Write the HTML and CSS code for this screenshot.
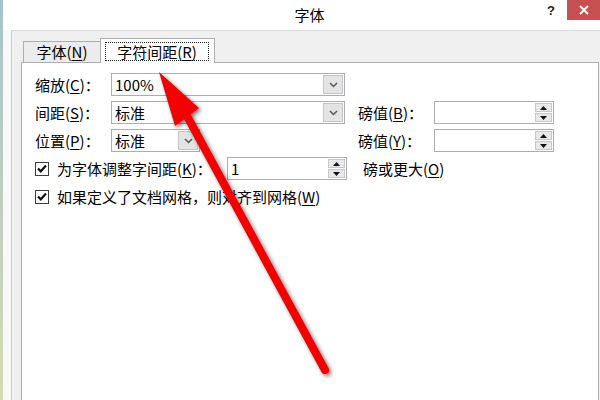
FILE: index.html
```html
<!DOCTYPE html>
<html lang="zh-CN">
<head>
    <meta charset="UTF-8">
    <title>字体</title>
    <link rel="stylesheet" href="styles.css">
</head>
<body>
<div class="screen">
    <div class="strip"></div>
    <div class="frame">
        <div class="titlebar">
            <span class="title">字体</span>
            <span class="help">?</span>
            <span class="close">
                <svg width="10" height="10" viewBox="0 0 10 10"><path d="M1 1 L9 9 M9 1 L1 9" stroke="#fff" stroke-width="1.8"/></svg>
            </span>
        </div>

        <div class="client">
            <div class="tabs">
                <div class="tab">字体(<u>N</u>)</div>
                <div class="tab active"><span class="focus">字符间距(<u>R</u>)</span></div>
            </div>

            <div class="panel">
                <div class="row">
                    <div class="left">
                        <span class="lbl">缩放(<u>C</u>)：</span>
                        <div class="combo wide">
                            <span class="val">100%</span>
                            <span class="drop"><svg width="9" height="6" viewBox="0 0 9 6"><path d="M1 1 L4.5 4.5 L8 1" fill="none" stroke="#555" stroke-width="1.5"/></svg></span>
                        </div>
                    </div>
                </div>

                <div class="row">
                    <div class="left">
                        <span class="lbl">间距(<u>S</u>)：</span>
                        <div class="combo wide">
                            <span class="val">标准</span>
                            <span class="drop"><svg width="9" height="6" viewBox="0 0 9 6"><path d="M1 1 L4.5 4.5 L8 1" fill="none" stroke="#555" stroke-width="1.5"/></svg></span>
                        </div>
                    </div>
                    <span class="lbl">磅值(<u>B</u>)：</span>
                    <div class="spin">
                        <span class="val"></span>
                        <span class="spin-btns">
                            <span class="sb"><svg width="7" height="4" viewBox="0 0 7 4"><path d="M0 4 L3.5 0 L7 4 Z" fill="#111"/></svg></span>
                            <span class="sb"><svg width="7" height="4" viewBox="0 0 7 4"><path d="M0 0 L3.5 4 L7 0 Z" fill="#111"/></svg></span>
                        </span>
                    </div>
                </div>

                <div class="row">
                    <div class="left">
                        <span class="lbl">位置(<u>P</u>)：</span>
                        <div class="combo short">
                            <span class="val">标准</span>
                            <span class="drop"><svg width="9" height="6" viewBox="0 0 9 6"><path d="M1 1 L4.5 4.5 L8 1" fill="none" stroke="#555" stroke-width="1.5"/></svg></span>
                        </div>
                    </div>
                    <span class="lbl">磅值(<u>Y</u>)：</span>
                    <div class="spin">
                        <span class="val"></span>
                        <span class="spin-btns">
                            <span class="sb"><svg width="7" height="4" viewBox="0 0 7 4"><path d="M0 4 L3.5 0 L7 4 Z" fill="#111"/></svg></span>
                            <span class="sb"><svg width="7" height="4" viewBox="0 0 7 4"><path d="M0 0 L3.5 4 L7 0 Z" fill="#111"/></svg></span>
                        </span>
                    </div>
                </div>

                <div class="row">
                    <span class="check"><svg width="10" height="9" viewBox="0 0 10 9"><path d="M1 4.5 L3.8 7.3 L9 1.5" fill="none" stroke="#111" stroke-width="2.2"/></svg></span>
                    <span class="check-lbl kern">为字体调整字间距(<u>K</u>)：</span>
                    <div class="spin">
                        <span class="val">1</span>
                        <span class="spin-btns">
                            <span class="sb"><svg width="7" height="4" viewBox="0 0 7 4"><path d="M0 4 L3.5 0 L7 4 Z" fill="#111"/></svg></span>
                            <span class="sb"><svg width="7" height="4" viewBox="0 0 7 4"><path d="M0 0 L3.5 4 L7 0 Z" fill="#111"/></svg></span>
                        </span>
                    </div>
                    <span class="after">磅或更大(<u>O</u>)</span>
                </div>

                <div class="row">
                    <span class="check"><svg width="10" height="9" viewBox="0 0 10 9"><path d="M1 4.5 L3.8 7.3 L9 1.5" fill="none" stroke="#111" stroke-width="2.2"/></svg></span>
                    <span class="check-lbl">如果定义了文档网格，则对齐到网格(<u>W</u>)</span>
                </div>
            </div>
        </div>
    </div>

    <!-- red annotation arrow drawn over the dialog -->
    <svg class="arrow" width="600" height="400" viewBox="0 0 600 400">
        <g class="arrow-shape">
            <line x1="187" y1="116" x2="325" y2="370" stroke="#f40000" stroke-width="8" stroke-linecap="round"/>
            <polygon points="159,72 199,108 175,126" fill="#f40000"/>
        </g>
    </svg>
</div>
</body>
</html>
```

FILE: styles.css
```css
/* General */
body {
    margin: 0;
    font-family: "Noto Sans CJK SC", "Liberation Sans", sans-serif;
    font-size: 15px;
    color: #000;
}

u {
    text-decoration: underline;
    text-underline-offset: 2px;
}

.screen {
    position: relative;
    width: 600px;
    height: 400px;
    overflow: hidden;
    display: flex;
    background: #fff;
}

.strip {
    width: 3px;
    background: linear-gradient(#a9c3cb, #d4dab5);
}

.frame {
    flex: 1;
    display: flex;
    flex-direction: column;
    background: #f8f8f8;
}

/* Title bar */
.titlebar {
    position: relative;
    height: 30px;
    background: #fff;
    display: flex;
    justify-content: center;
    align-items: center;
}

.title {
    padding-left: 16px;
    line-height: 30px;
}

.help {
    position: absolute;
    top: 3px;
    right: 45px;
    font-family: "Liberation Sans", sans-serif;
    font-weight: bold;
    font-size: 13px;
    color: #222;
}

.close {
    position: absolute;
    top: 0;
    right: 0;
    width: 33px;
    height: 20px;
    background: #c75050;
    display: flex;
    justify-content: center;
    align-items: center;
}

/* Client area */
.client {
    flex: 1;
    margin-left: 8px;
    border-top: 1px solid #dadada;
    border-left: 1px solid #cfcfcf;
    background: #f0f0f0;
    padding: 7px 1px 0 9px;
    display: flex;
    flex-direction: column;
}

.tabs {
    display: flex;
    align-items: flex-end;
    height: 24px;
    padding-left: 2px;
}

.tab {
    box-sizing: border-box;
    width: 77px;
    height: 21px;
    border: 1px solid #adadad;
    border-bottom: none;
    border-right: none;
    background: #ececec;
    text-align: center;
    line-height: 19px;
}

.tab.active {
    position: relative;
    z-index: 1;
    width: 115px;
    height: 25px;
    margin-bottom: -1px;
    border-right: 1px solid #adadad;
    background: #fff;
    padding: 3px 5px 2px 4px;
    line-height: 17px;
}

.focus {
    display: block;
    height: 100%;
    box-sizing: border-box;
    border: 1px dotted #222;
}

.panel {
    flex: 1;
    background: #fff;
    border: 1px solid #adadad;
    border-bottom: none;
    padding: 10px 0 0 13px;
    display: flex;
    flex-direction: column;
    gap: 5px;
}

/* Rows */
.row {
    display: flex;
    align-items: center;
    height: 23px;
}

.left {
    display: flex;
    align-items: center;
    width: 323px;
}

.lbl {
    width: 76px;
    white-space: nowrap;
}

.combo, .spin {
    box-sizing: border-box;
    height: 23px;
    border: 1px solid #abadb3;
    background: #fff;
    display: flex;
    align-items: stretch;
}

.combo.wide {
    width: 234px;
}

.combo.short {
    width: 89px;
}

.spin {
    width: 120px;
}

.val {
    flex: 1;
    padding-left: 3px;
    line-height: 21px;
}

.drop {
    width: 20px;
    margin: 1px;
    background: #e4e4e4;
    border: 1px solid #c4c4c4;
    box-sizing: border-box;
    display: flex;
    justify-content: center;
    align-items: center;
}

.spin-btns {
    width: 17px;
    margin: 1px;
    display: flex;
    flex-direction: column;
    gap: 1px;
}

.sb {
    flex: 1;
    background: #e8e8e8;
    border: 1px solid #c8c8c8;
    box-sizing: border-box;
    display: flex;
    justify-content: center;
    align-items: center;
}

/* Checkboxes */
.check {
    box-sizing: border-box;
    width: 14px;
    height: 14px;
    border: 1px solid #3c3c3c;
    background: #fff;
    display: flex;
    justify-content: center;
    align-items: center;
    margin-right: 8px;
}

.check-lbl {
    white-space: nowrap;
}

.check-lbl.kern {
    width: 170px;
}

.after {
    margin-left: 16px;
}

/* Annotation arrow */
.arrow {
    position: absolute;
    top: 0;
    left: 0;
    pointer-events: none;
}

.arrow-shape {
    filter: drop-shadow(2px 2px 2px rgba(0, 0, 0, 0.55));
}
```
